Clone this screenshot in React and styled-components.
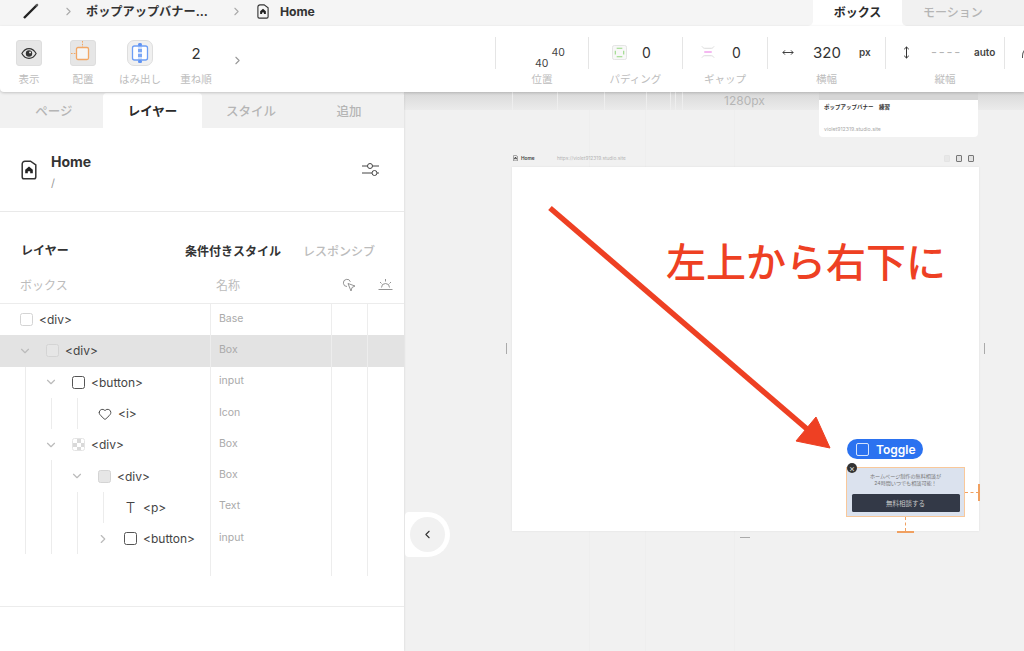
import { createGlobalStyle, styled } from "styled-components";
import { ChevronRight, ChevronDown, ChevronLeft, Heart } from "lucide-react";

const GlobalStyle = createGlobalStyle`
    html, body {
        margin: 0;
        padding: 0;
        background: #f1f1f1;
    }
    * {
        box-sizing: border-box;
    }
    body {
        font-family: "Inter", "Noto Sans CJK JP", sans-serif;
        color: #2b2b2b;
    }
`;

const PageIcon = ({ size = 14 }) => (
    <svg width={size} height={size * 1.25} viewBox="0 0 16 20" fill="none">
        <path d="M4 1.2h5.5L14.8 5v12a1.8 1.8 0 0 1-1.8 1.8H3A1.8 1.8 0 0 1 1.2 17V4A2.8 2.8 0 0 1 4 1.2z" stroke="#333" strokeWidth="1.5" />
        <path d="M8 6.4l3.8 3.4v3.4H9.2v-2H6.8v2H4.2V9.8z" fill="#222" />
    </svg>
);

const Pencil = () => (
    <svg width="18" height="16" viewBox="0 0 18 16" fill="none">
        <path d="M2 15L15 2" stroke="#222" strokeWidth="2.4" />
        <path d="M13.6 3.4L15.8 1.2" stroke="#555" strokeWidth="2" />
    </svg>
);

const EyeIcon = () => (
    <svg width="16" height="13" viewBox="0 0 18 14" fill="none">
        <path d="M1 7c2-3.6 5-5.5 8-5.5S15 3.4 17 7c-2 3.6-5 5.5-8 5.5S3 10.6 1 7z" stroke="#333" strokeWidth="1.3" />
        <circle cx="9" cy="7" r="3.6" fill="#333" />
        <circle cx="10.2" cy="5.8" r="1" fill="#fff" />
    </svg>
);

const PlaceIcon = () => (
    <svg width="24" height="24" viewBox="0 0 24 24" fill="none">
        <rect x="5.5" y="6.5" width="12" height="12" rx="1.5" fill="#f6f6f6" stroke="#f2a765" strokeWidth="1.3" />
        <path d="M11.5 0v6.5M0 12.5h5.5" stroke="#f2a765" strokeWidth="1" strokeDasharray="1.6 1.2" />
    </svg>
);

const OverflowIcon = () => (
    <svg width="24" height="24" viewBox="1 1 24 24" fill="none">
        <rect x="5.5" y="6" width="15" height="14" rx="2" fill="#fff" stroke="#6d9ef5" strokeWidth="1.3" />
        <rect x="11" y="3" width="4" height="20" rx="1.5" fill="#6d9ef5" opacity="0.3" />
        <rect x="11" y="3" width="4" height="3" rx="1.5" fill="#5f93f3" />
        <rect x="11" y="20" width="4" height="3" rx="1.5" fill="#5f93f3" />
        <rect x="11" y="9" width="4" height="3" fill="#7da8f5" />
        <rect x="11" y="14" width="4" height="3" fill="#7da8f5" />
    </svg>
);

const PaddingIcon = () => (
    <svg width="15" height="15" viewBox="0 0 16 16" fill="none">
        <rect x="0.5" y="0.5" width="15" height="15" rx="2" fill="#f8f8f8" stroke="#e2e2e2" />
        <path d="M5 3.5h6M5 12.5h6M3.5 6v4M12.5 6v4" stroke="#93d67e" strokeWidth="1.1" />
    </svg>
);

const GapIcon = () => (
    <svg width="14" height="14" viewBox="0 0 15 14" fill="none">
        <path d="M1 1c1 1.5 2 2 3 2h7c1 0 2-.5 3-2M1 13c1-1.5 2-2 3-2h7c1 0 2 .5 3 2" stroke="#d8d8d8" strokeWidth="1" />
        <path d="M3.5 7h8" stroke="#ee8be8" strokeWidth="1.3" />
    </svg>
);

const WidthIcon = () => (
    <svg width="12" height="7" viewBox="0 0 13 7" fill="none">
        <path d="M1 3.5h11M3.2 1.2L1 3.5l2.2 2.3M9.8 1.2L12 3.5 9.8 5.8" stroke="#333" strokeWidth="1" />
    </svg>
);

const HeightIcon = () => (
    <svg width="7" height="13" viewBox="0 0 7 13" fill="none">
        <path d="M3.5 1v11M1.2 3.2L3.5 1l2.3 2.2M1.2 9.8L3.5 12l2.3-2.2" stroke="#333" strokeWidth="1" />
    </svg>
);

const SlidersIcon = () => (
    <svg width="19" height="17" viewBox="0 0 19 17" fill="none">
        <path d="M1 5h5.5M11.5 5H18M1 12h10M16 12h2" stroke="#444" strokeWidth="1" />
        <circle cx="9" cy="5" r="2.5" stroke="#444" />
        <circle cx="13.5" cy="12" r="2.5" stroke="#444" />
    </svg>
);

const CursorIcon = () => (
    <svg width="14" height="14" viewBox="0 0 14 14" fill="none">
        <path d="M6 5.5l7 2.5-3 1.5-1 3.5z" stroke="#888" strokeWidth="0.9" strokeLinejoin="round" />
        <path d="M5 8.5A3.6 3.6 0 1 1 8.4 3.8" stroke="#888" strokeWidth="0.9" />
    </svg>
);

const SunriseIcon = () => (
    <svg width="15" height="13" viewBox="0 0 15 13" fill="none">
        <path d="M0.5 11.5h14M3.5 9.5a4 4 0 0 1 8 0M7.5 1v2.5M2 4l1.5 1.5M13 4l-1.5 1.5" stroke="#888" strokeWidth="0.9" />
    </svg>
);

const ToolItems = [
    { label: "表示", width: 54, icon: <EyeIcon />, boxed: true },
    { label: "配置", width: 54, icon: <PlaceIcon />, boxed: true },
    { label: "はみ出し", width: 60, icon: <OverflowIcon />, boxed: true, round: true },
    { label: "重ね順", width: 52, count: "2" },
];

const Rows = [
    { name: "<div>", type: "Base", lines: [], box: "light" },
    { name: "<div>", type: "Box", lines: [0], chevron: "down", box: "gray", active: true },
    { name: "<button>", type: "input", lines: [1, 0], chevron: "down", box: "dark" },
    { name: "<i>", type: "Icon", lines: [1, 1, 1], box: "heart" },
    { name: "<div>", type: "Box", lines: [1, 0], chevron: "down", box: "checker" },
    { name: "<div>", type: "Box", lines: [1, 1, 0], chevron: "down", box: "fill" },
    { name: "<p>", type: "Text", lines: [1, 1, 1, 1], box: "text" },
    { name: "<button>", type: "input", lines: [1, 1, 1, 0], chevron: "right", box: "dark" },
];

function RowGlyph({ kind }) {
    if (kind === "heart") return <HeartWrap><Heart size={14} strokeWidth={1.6} color="#444" /></HeartWrap>;
    if (kind === "text") return <TextGlyph>T</TextGlyph>;
    return <CheckBox $kind={kind} />;
}

export default function App() {
    return (
        <Screen>
            <GlobalStyle />
            <TopBar>
                <Crumbs>
                    <PencilWrap><Pencil /></PencilWrap>
                    <ChevronRight size={13} color="#aaa" />
                    <CrumbText $trail={11}>ポップアップバナー...</CrumbText>
                    <ChevronRight size={13} color="#aaa" />
                    <CrumbPage><PageIcon size={12} /></CrumbPage>
                    <CrumbText>Home</CrumbText>
                </Crumbs>
                <ModeTab $active>ボックス</ModeTab>
                <ModeTab>モーション</ModeTab>
            </TopBar>

            <Toolbar>
                <ToolGroup>
                    {ToolItems.map((t) => (
                        <Tool key={t.label} $width={t.width}>
                            <ToolTop>
                                {t.count ? <Count>{t.count}</Count> : <IconBox $round={t.round}>{t.icon}</IconBox>}
                            </ToolTop>
                            <ToolLabel>{t.label}</ToolLabel>
                        </Tool>
                    ))}
                    <MoreChevron><ChevronRight size={13} color="#999" /></MoreChevron>
                </ToolGroup>
                <PropGroup>
                    <Prop $width={93}>
                        <PropTop $pad={39}>
                            <Position>
                                <span>40</span>
                                <span>40</span>
                            </Position>
                        </PropTop>
                        <PropLabel>位置</PropLabel>
                    </Prop>
                    <Prop $width={94}>
                        <PropTop $pad={23}><PaddingIcon /><PropValue $gap={15}>0</PropValue></PropTop>
                        <PropLabel>パディング</PropLabel>
                    </Prop>
                    <Prop $width={85}>
                        <PropTop $pad={18}><GapIcon /><PropValue $gap={17}>0</PropValue></PropTop>
                        <PropLabel>ギャップ</PropLabel>
                    </Prop>
                    <Prop $width={118}>
                        <PropTop $pad={14}>
                            <WidthIcon />
                            <BigValue>320</BigValue>
                            <Unit>px</Unit>
                        </PropTop>
                        <PropLabel>横幅</PropLabel>
                    </Prop>
                    <Prop $width={119}>
                        <PropTop $pad={17}>
                            <HeightIcon />
                            <Dashes>----</Dashes>
                            <Unit>auto</Unit>
                        </PropTop>
                        <PropLabel>縦幅</PropLabel>
                    </Prop>
                    <Prop $width={20}>
                        <PropTop $pad={17}><CutIcon /></PropTop>
                    </Prop>
                </PropGroup>
            </Toolbar>

            <Body>
                <Sidebar>
                    <SideTabs>
                        <SideTab>ページ</SideTab>
                        <SideTab $active>レイヤー</SideTab>
                        <SideTab>スタイル</SideTab>
                        <SideTab>追加</SideTab>
                    </SideTabs>

                    <PageHead>
                        <PageIcon size={16} />
                        <PageTitle>
                            <strong>Home</strong>
                            <span>/</span>
                        </PageTitle>
                        <SlidersWrap><SlidersIcon /></SlidersWrap>
                    </PageHead>

                    <SectionRow>
                        <SectionTitle>レイヤー</SectionTitle>
                        <SectionLink $on>条件付きスタイル</SectionLink>
                        <SectionLink>レスポンシブ</SectionLink>
                    </SectionRow>

                    <ColumnHead>
                        <span>ボックス</span>
                        <span>名称</span>
                        <HeadIcon><CursorIcon /></HeadIcon>
                        <HeadIcon><SunriseIcon /></HeadIcon>
                    </ColumnHead>

                    {Rows.map((r, i) => (
                        <Row key={i} $active={r.active}>
                            <NameCell>
                                {r.lines.map((line, n) => (
                                    <Indent key={n} $line={line}>
                                        {n === r.lines.length - 1 && r.chevron === "down" && <ChevronDown size={14} color="#bbb" />}
                                        {n === r.lines.length - 1 && r.chevron === "right" && <ChevronRight size={14} color="#bbb" />}
                                    </Indent>
                                ))}
                                <RowGlyph kind={r.box} />
                                <TagName>{r.name}</TagName>
                            </NameCell>
                            <TypeCell>{r.type}</TypeCell>
                            <EmptyCell />
                            <EmptyCell />
                        </Row>
                    ))}
                    <Row $tail>
                        <NameCell />
                        <TypeCell />
                        <EmptyCell />
                        <EmptyCell />
                    </Row>
                    <SideFooter />
                </Sidebar>

                <CollapseTab>
                    <CollapseKnob><ChevronLeft size={13} color="#333" /></CollapseKnob>
                </CollapseTab>

                <Canvas>
                    <RulerBand>
                        <RulerText>1280px</RulerText>
                    </RulerBand>

                    <SiteCard>
                        <SiteCardTitle>ポップアップバナー　練習</SiteCardTitle>
                        <SiteCardUrl>violet912319.studio.site</SiteCardUrl>
                    </SiteCard>

                    <BoardHead>
                        <PageIcon size={5} />
                        <BoardName>Home</BoardName>
                        <BoardUrl>https://violet912319.studio.site</BoardUrl>
                        <BoardIcons>
                            <BoardIcon $faint />
                            <BoardIcon />
                            <BoardIcon />
                        </BoardIcons>
                    </BoardHead>

                    <Artboard />
                    <SideHandle $at="left" />
                    <SideHandle $at="right" />
                    <BottomHandle />

                    <ArrowSvg width="300" height="260" viewBox="0 0 300 260" fill="none">
                        <path d="M6 6L270 233" stroke="#ee4023" strokeWidth="5.5" />
                        <path d="M286 246L252 239L272 215z" fill="#ee4023" stroke="#ee4023" strokeWidth="1" />
                    </ArrowSvg>
                    <Annotation>左上から右下に</Annotation>

                    <TogglePill>
                        <ToggleBox />
                        Toggle
                    </TogglePill>

                    <Banner>
                        <BannerText>ホームページ制作の無料相談が<br />24時間いつでも相談可能！</BannerText>
                        <BannerButton>無料相談する</BannerButton>
                    </Banner>
                    <CloseDot>×</CloseDot>

                    <GuideH />
                    <GuideHTick />
                    <GuideV />
                    <GuideVTick />
                </Canvas>
            </Body>
        </Screen>
    );
}

const Screen = styled.div`
    width: 1024px;
    height: 651px;
    overflow: hidden;
    position: relative;
    display: flex;
    flex-direction: column;
    background: #f1f1f1;
`;

const TopBar = styled.div`
    height: 26px;
    flex: none;
    display: flex;
    background: #fff;
`;

const Crumbs = styled.div`
    width: 813px;
    display: flex;
    align-items: center;
    gap: 11px;
    padding: 0 0 4px 22px;
    background: #f5f5f5;
    border-bottom-right-radius: 5px;
`;

const PencilWrap = styled.div`
    width: 29px;
    display: flex;
`;

const CrumbText = styled.span`
    font-size: 12.2px;
    font-weight: 700;
    color: #333;
    white-space: nowrap;
    margin-right: ${(p) => p.$trail || 0}px;
`;

const CrumbPage = styled.span`
    display: flex;
    margin-left: 3px;
`;

const ModeTab = styled.div`
    width: ${(p) => (p.$active ? "89px" : "122px")};
    display: flex;
    align-items: center;
    justify-content: ${(p) => (p.$active ? "center" : "flex-start")};
    padding: 0 0 4px ${(p) => (p.$active ? "0" : "21px")};
    font-size: 12px;
    font-weight: ${(p) => (p.$active ? 700 : 500)};
    color: ${(p) => (p.$active ? "#2b2b2b" : "#b5b5b5")};
    background: ${(p) => (p.$active ? "#fff" : "#f1f1f1")};
    border-bottom-left-radius: ${(p) => (p.$active ? "0" : "5px")};
`;

const Toolbar = styled.div`
    height: 66px;
    flex: none;
    display: flex;
    justify-content: space-between;
    background: #fff;
    box-shadow: 0 1px 3px rgba(0, 0, 0, 0.18);
    position: relative;
    z-index: 3;
    border-bottom-left-radius: 4px;
`;

const ToolGroup = styled.div`
    display: flex;
    padding-left: 2px;
`;

const Tool = styled.div`
    width: ${(p) => p.$width}px;
    display: flex;
    flex-direction: column;
    align-items: center;
`;

const ToolTop = styled.div`
    height: 40px;
    padding-top: 14px;
    display: flex;
    align-items: center;
    justify-content: center;
`;

const ToolLabel = styled.div`
    margin-top: 7px;
    font-size: 10.5px;
    line-height: 14px;
    color: #bdbdbd;
    white-space: nowrap;
`;

const IconBox = styled.div`
    width: 26px;
    height: 26px;
    display: flex;
    align-items: center;
    justify-content: center;
    background: ${(p) => (p.$round ? "#f0f0f0" : "#e6e6e6")};
    border: 1px solid #dedede;
    border-radius: ${(p) => (p.$round ? "7px" : "3px")};
`;

const Count = styled.span`
    font-size: 15px;
    color: #333;
`;

const MoreChevron = styled.div`
    margin: 25px 0 0 9px;
`;

const PropGroup = styled.div`
    display: flex;
    height: 32px;
    margin-top: 11px;
`;

const Prop = styled.div`
    width: ${(p) => p.$width}px;
    height: 32px;
    border-left: 1px solid #e5e5e5;
    display: flex;
    flex-direction: column;
`;

const PropTop = styled.div`
    height: 30px;
    flex: none;
    display: flex;
    align-items: center;
    padding-left: ${(p) => p.$pad}px;
`;

const PropLabel = styled.div`
    margin-top: 6px;
    font-size: 10.5px;
    line-height: 14px;
    color: #bdbdbd;
    text-align: center;
    white-space: nowrap;
`;

const Position = styled.div`
    width: 30px;
    height: 30px;
    padding-top: 10px;
    display: flex;
    flex-direction: column;
    font-size: 10.5px;
    line-height: 11px;
    color: #444;
    span:first-child {
        align-self: flex-end;
    }
`;

const PropValue = styled.span`
    margin-left: ${(p) => p.$gap}px;
    font-size: 14px;
    color: #333;
`;

const BigValue = styled.span`
    margin: 0 18px 0 19px;
    font-size: 15px;
    color: #333;
`;

const Unit = styled.span`
    font-size: 10px;
    font-weight: 600;
    color: #444;
`;

const Dashes = styled.span`
    width: 28px;
    margin: 0 15px 0 21px;
    font-size: 13px;
    letter-spacing: 1.8px;
    color: #b5b5b5;
    white-space: nowrap;
`;

const CutIcon = styled.span`
    width: 12px;
    height: 12px;
    flex: none;
    border-top: 1.2px solid #555;
    border-left: 1.2px solid #555;
    border-top-left-radius: 10px;
`;

const Body = styled.div`
    flex: 1;
    display: flex;
    position: relative;
    min-height: 0;
`;

const Sidebar = styled.div`
    width: 404px;
    flex: none;
    margin-top: 1px;
    display: flex;
    flex-direction: column;
    background: #fff;
    border-top-left-radius: 5px;
    border-top-right-radius: 4px;
    box-shadow: 1px 0 2px rgba(0, 0, 0, 0.06);
    position: relative;
    z-index: 2;
`;

const SideTabs = styled.div`
    height: 35px;
    flex: none;
    display: flex;
    padding-left: 5px;
    background: #f1f1f1;
    border-top-right-radius: 4px;
`;

const SideTab = styled.div`
    width: ${(p) => (p.$active ? "99px" : "98px")};
    display: flex;
    align-items: center;
    justify-content: center;
    font-size: 12.5px;
    font-weight: ${(p) => (p.$active ? 700 : 500)};
    color: ${(p) => (p.$active ? "#2b2b2b" : "#b5b5b5")};
    background: ${(p) => (p.$active ? "#fff" : "transparent")};
    border-radius: ${(p) => (p.$active ? "4px 4px 0 0" : "0")};
`;

const PageHead = styled.div`
    height: 84px;
    flex: none;
    display: flex;
    align-items: center;
    gap: 14px;
    padding: 0 24px 0 21px;
    border-bottom: 1px solid #e9e9e9;
`;

const PageTitle = styled.div`
    flex: 1;
    display: flex;
    flex-direction: column;
    gap: 6px;
    margin-top: 4px;
    strong {
        font-size: 14px;
        line-height: 17px;
        font-weight: 700;
        color: #333;
    }
    span {
        font-size: 11px;
        line-height: 14px;
        color: #999;
    }
`;

const SlidersWrap = styled.div`
    display: flex;
`;

const SectionRow = styled.div`
    height: 64px;
    flex: none;
    display: flex;
    align-items: center;
    padding: 13px 29px 0 21px;
    font-size: 12px;
`;

const SectionTitle = styled.div`
    width: 165px;
    margin-top: -2px;
    font-weight: 700;
    color: #333;
`;

const SectionLink = styled.div`
    margin-right: 22px;
    font-weight: ${(p) => (p.$on ? 700 : 500)};
    color: ${(p) => (p.$on ? "#333" : "#bcbcbc")};
    white-space: nowrap;
    &:last-child {
        margin-right: 0;
    }
`;

const ColumnHead = styled.div`
    flex: none;
    display: grid;
    grid-template-columns: 196px 114px 37px 37px;
    align-items: center;
    padding-left: 20px;
    padding-bottom: 11px;
    height: 28px;
    font-size: 12px;
    color: #bcbcbc;
    border-bottom: 1px solid #ececec;
`;

const HeadIcon = styled.span`
    display: flex;
    justify-content: center;
`;

const Row = styled.div`
    height: ${(p) => (p.$tail ? "22px" : "31.3px")};
    flex: none;
    display: grid;
    grid-template-columns: 210px 121px 36px 37px;
    background: ${(p) => (p.$active ? "#e3e3e3" : "transparent")};
`;

const NameCell = styled.div`
    display: flex;
    align-items: stretch;
    padding-left: 20px;
`;

const Indent = styled.span`
    width: 26px;
    flex: none;
    display: flex;
    align-items: center;
    svg {
        margin-left: -2px;
    }
    &::before {
        content: "";
        display: ${(p) => (p.$line ? "block" : "none")};
        width: 1px;
        height: 100%;
        margin-left: 5px;
        background: #ececec;
    }
`;

const CheckBox = styled.span`
    width: 13px;
    height: 13px;
    flex: none;
    align-self: center;
    margin-right: 6px;
    border-radius: 2.5px;
    border: 1px solid ${(p) => (p.$kind === "dark" ? "#555" : "#d4d4d4")};
    background: ${(p) => (p.$kind === "fill" || p.$kind === "gray" ? "#e6e6e6" : "#fff")};
    ${(p) => p.$kind === "checker" && `
        border-color: #e4e4e4;
        background: repeating-conic-gradient(#d9d9d9 0 25%, #fff 0 50%) 0 0 / 8px 8px;
    `}
`;

const HeartWrap = styled.span`
    display: flex;
    align-self: center;
    margin-right: 6px;
`;

const TextGlyph = styled.span`
    width: 13px;
    flex: none;
    align-self: center;
    margin-right: 6px;
    font-size: 15px;
    font-weight: 300;
    color: #444;
    line-height: 1;
    text-align: center;
`;

const TagName = styled.span`
    align-self: center;
    font-size: 12px;
    color: #444;
`;

const TypeCell = styled.div`
    display: flex;
    align-items: center;
    padding: 0 0 3px 8px;
    border-left: 1px solid #ededed;
    font-size: 10.5px;
    color: #aaa;
`;

const EmptyCell = styled.div`
    border-left: 1px solid #ededed;
`;

const SideFooter = styled.div`
    margin-top: 30px;
    border-top: 1px solid #ececec;
`;

const CollapseTab = styled.div`
    position: absolute;
    left: 405px;
    top: 420px;
    width: 45px;
    height: 45px;
    z-index: 3;
    display: flex;
    align-items: center;
    justify-content: center;
    background: #fff;
    border-radius: 4px 23px 23px 4px;
`;

const CollapseKnob = styled.div`
    width: 35px;
    height: 35px;
    display: flex;
    align-items: center;
    justify-content: center;
    border-radius: 50%;
    background: #f1f1f1;
`;

const Canvas = styled.div`
    flex: 1;
    position: relative;
    background:
        linear-gradient(90deg, transparent 185px, #eee 185px, #eee 186px, transparent 186px, transparent 241px, #eee 241px, #eee 242px, transparent 242px, transparent 330px, #eee 330px, #eee 331px, transparent 331px) 0 0 / 100% 100%,
        #f1f1f1;
`;

const RulerBand = styled.div`
    height: 18px;
    display: flex;
    justify-content: center;
    padding: 2px 0 0 61px;
    background:
        linear-gradient(90deg, transparent 108px, #eee 108px, #eee 109px, transparent 109px, transparent 153px, #eee 153px, #eee 154px, transparent 154px, transparent 200px, #eee 200px, #eee 201px, transparent 201px, transparent 242px, #eee 242px, #eee 243px, transparent 243px, transparent 266px, #eee 266px, #eee 267px, transparent 267px, transparent 271px, #eee 271px, #eee 272px, transparent 272px, transparent 278px, #eee 278px, #eee 279px, transparent 279px) 0 0 / 100% 100%,
        linear-gradient(#d9d9d9, #ebebeb);
`;

const RulerText = styled.span`
    font-size: 12px;
    line-height: 14px;
    color: #b5b5b5;
`;

const SiteCard = styled.div`
    position: absolute;
    left: 415px;
    top: 0;
    width: 159px;
    height: 45px;
    padding: 12px 5px 0;
    background: linear-gradient(#d6d6d6 0, #d6d6d6 8px, #fff 8px);
    border-radius: 0 0 4px 4px;
`;

const SiteCardTitle = styled.div`
    font-size: 5.5px;
    line-height: 7px;
    font-weight: 700;
    color: #333;
`;

const SiteCardUrl = styled.div`
    margin-top: 15px;
    font-size: 5.2px;
    line-height: 7px;
    color: #aaa;
`;

const BoardHead = styled.div`
    position: absolute;
    left: 109px;
    top: 62px;
    width: 467px;
    height: 8px;
    padding-right: 6px;
    display: flex;
    align-items: center;
    font-size: 4.8px;
`;

const BoardName = styled.span`
    width: 36px;
    margin-left: 3px;
    font-weight: 600;
    color: #444;
`;

const BoardUrl = styled.span`
    color: #b5b5b5;
`;

const BoardIcons = styled.div`
    display: flex;
    gap: 6px;
    margin-left: auto;
`;

const BoardIcon = styled.span`
    width: 6px;
    height: 7px;
    background: ${(p) => (p.$faint ? "#e8e8e8" : "#e2e2e2")};
    border: 0.7px solid ${(p) => (p.$faint ? "#e4e4e4" : "#777")};
    border-radius: 1px;
`;

const Artboard = styled.div`
    position: absolute;
    left: 108px;
    top: 75px;
    width: 467px;
    height: 364px;
    background: #fff;
    box-shadow: 0 0 2px rgba(0, 0, 0, 0.08);
`;

const SideHandle = styled.span`
    position: absolute;
    left: ${(p) => (p.$at === "left" ? "102px" : "580px")};
    top: 251px;
    width: 1px;
    height: 11px;
    background: #aaa;
`;

const BottomHandle = styled.span`
    position: absolute;
    left: 336px;
    top: 445px;
    width: 10px;
    height: 1px;
    background: #aaa;
`;

const ArrowSvg = styled.svg`
    position: absolute;
    left: 140px;
    top: 110px;
`;

const Annotation = styled.div`
    position: absolute;
    left: 262px;
    top: 147px;
    font-size: 40px;
    line-height: 48px;
    font-weight: 500;
    color: #ee4023;
    white-space: nowrap;
`;

const TogglePill = styled.div`
    position: absolute;
    left: 443px;
    top: 347px;
    width: 76px;
    height: 20px;
    display: flex;
    align-items: center;
    gap: 7px;
    padding-left: 9px;
    font-size: 12px;
    font-weight: 600;
    color: #fff;
    background: #2b72f0;
    border-radius: 10px;
`;

const ToggleBox = styled.span`
    width: 13px;
    height: 13px;
    border: 1px solid rgba(255, 255, 255, 0.8);
    border-radius: 2px;
`;

const Banner = styled.div`
    position: absolute;
    left: 442px;
    top: 375px;
    width: 119px;
    height: 50px;
    padding: 5px 5px 0;
    display: flex;
    flex-direction: column;
    align-items: center;
    background: #dbe2ee;
    border: 1px solid #f9c89a;
`;

const BannerText = styled.div`
    height: 21px;
    font-size: 5.1px;
    line-height: 7px;
    text-align: center;
    color: #777;
    white-space: nowrap;
`;

const BannerButton = styled.div`
    width: 108px;
    height: 18px;
    flex: none;
    display: flex;
    align-items: center;
    justify-content: center;
    font-size: 6.5px;
    color: #c8c8c8;
    background: #333947;
    border-radius: 1.5px;
`;

const CloseDot = styled.span`
    position: absolute;
    left: 443px;
    top: 371px;
    width: 10px;
    height: 10px;
    display: flex;
    align-items: center;
    justify-content: center;
    font-size: 9px;
    line-height: 1;
    color: #ddd;
    background: #333;
    border-radius: 50%;
`;

const GuideH = styled.span`
    position: absolute;
    left: 561px;
    top: 400px;
    width: 14px;
    border-top: 1px dashed #f0a060;
`;

const GuideHTick = styled.span`
    position: absolute;
    left: 574px;
    top: 392px;
    width: 2px;
    height: 17px;
    background: #f0a060;
`;

const GuideV = styled.span`
    position: absolute;
    left: 501px;
    top: 425px;
    height: 14px;
    border-left: 1px dashed #f0a060;
`;

const GuideVTick = styled.span`
    position: absolute;
    left: 493px;
    top: 439px;
    width: 17px;
    height: 2px;
    background: #f0a060;
`;
